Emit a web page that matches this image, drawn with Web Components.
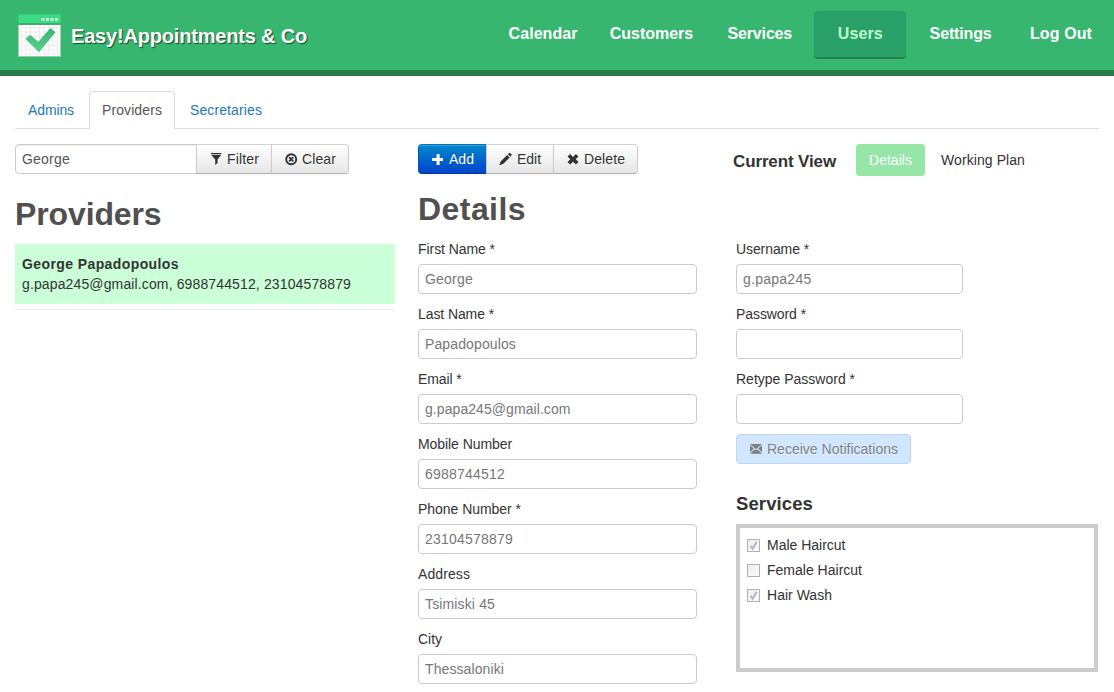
<!DOCTYPE html>
<html lang="en">
<head>
<meta charset="utf-8">
<title>Easy!Appointments</title>
<style>
html,body{margin:0;height:100%;overflow:hidden;background:#fff}
body{font:14px/20px "Liberation Sans",Arial,sans-serif;color:#333}
</style>
</head>
<body>
<ea-app></ea-app>
<script>
const define = (name, css, html, after) => customElements.define(name, class extends HTMLElement {
  connectedCallback() {
    if (this.shadowRoot) return;
    const t = document.createElement('template');
    t.innerHTML = `<style>*{box-sizing:border-box}:host{display:block;box-sizing:border-box}${css}</style>${typeof html === 'function' ? html(this) : html}`;
    this.attachShadow({mode: 'open'}).append(t.content.cloneNode(true));
    if (after) after(this);
  }
});

/* Text tracked so that it fills the advance width given in "w". */
define('ea-text', `:host{display:inline-block;white-space:nowrap}`, `<span><slot></slot></span>`, el => {
  const w = parseFloat(el.getAttribute('w'));
  const span = el.shadowRoot.querySelector('span');
  if (!w) return;
  span.style.letterSpacing = (w - span.getBoundingClientRect().width) / el.textContent.length + 'px';
  el.style.width = w + 'px';
});

const icons = {
  filter: `<path d="M2 1h10.400v1.200H2zM2.300 3h9.800L8.600 7.600v3.400L6.200 13V7.600z"/>`,
  clear: `<circle cx="7.200" cy="7.300" r="5" fill="none" stroke="currentColor" stroke-width="1.900"/><path d="M5.100 5.200l4.200 4.200M9.300 5.200L5.100 9.400" stroke="currentColor" stroke-width="1.700"/>`,
  plus: `<path d="M5.600 2h3v4h3.400v3H8.600v4h-3V9H1V6h4.600z"/>`,
  pencil: `<path d="M.2 13.300L1.600 9.500 8.200 2.900l2.500 2.500-6.600 6.600zM8.900 2.200l1.100-1.100q.8-.5 1.500.2l.9.900q.6.700 0 1.400l-1 1.100z"/>`,
  remove: `<path d="M4.100 2.100L7 4.900l2.900-2.800 2.600 2.500L9.700 7.300l2.800 2.800-2.600 2.500L7 9.800l-2.900 2.800-2.600-2.500 2.800-2.800-2.800-2.700z"/>`,
  mail: `<path d="M1 2h12L7 7.300zM1 3.200l3.800 3.400L1 10.600zM13 3.200L9.200 6.600l3.800 4zM5.500 7.200L7 8.500l1.500-1.300 4.300 4.600H1.200z"/>`
};
define('ea-icon', `:host{width:14px;height:14px;color:inherit}svg{display:block;fill:currentColor}`,
  el => `<svg width="14" height="14" viewBox="0 0 14 14">${icons[el.getAttribute('name')]}</svg>`);

define('ea-logo', `:host{width:43px;height:43px}svg{display:block}`, `
<svg width="43" height="43" viewBox="0 0 43 43">
<defs><linearGradient id="c" x1="0" y1="0" x2="0" y2="1"><stop offset="0" stop-color="#38b771"/><stop offset="1" stop-color="#5bd08f"/></linearGradient></defs>
<rect width="43" height="43" fill="#8fcfa9"/><rect width="43" height="10" fill="#3ddb84"/><rect x=".5" y=".5" width="42" height="9" fill="none" stroke="#35cf79"/>
<rect y="9.500" width="43" height="1.200" fill="#2a9d5d"/>
<path d="M23.500 4h3v3h-3zM28 4h3v3h-3zM32.500 4h3v3h-3zM37 4h3v3h-3z" fill="#c5f5d9"/>
<rect x=".8" y="11" width="41.400" height="31" fill="#fff"/>
<path d="M3.500 12v28M8 12v28M12.500 12v28M17 12v28M21.500 12v28M26 12v28M30.500 12v28M35 12v28M39.500 12v28M3 13.500h37M3 18h37M3 22.500h37M3 27h37M3 31.500h37M3 36h37M3 40h37" stroke="#ececec" fill="none"/>
<path d="M7.500 25l4.500-4.300 8.300 7.100L32.500 14l5 4.300L21 38.300z" fill="url(#c)"/>
</svg>`);

define('ea-nav-item', `:host{height:48px;width:92px;padding-top:13px;text-align:center;font-weight:bold;font-size:16px;color:#fff;border-radius:4px;border-bottom:2px solid transparent}
:host([wide]){width:108px}:host([active]){background:#2aa069;border-bottom-color:#22814f;color:#bdffcb}`, `<slot></slot>`);

define('ea-header', `:host{height:76px;background:#37b66f;border-bottom:6px solid #267a4b;display:flex;align-items:flex-start;padding:11px 7px 0 18px}
ea-logo{margin-top:3px}.name{margin:15px auto 0 10px;font-size:20px;font-weight:bold;color:#fff;text-shadow:1px 1px 1px #1c4b2c}
nav{display:flex;gap:8.400px}`, `
<ea-logo></ea-logo><div class="name"><ea-text w="236">Easy!Appointments &amp; Co</ea-text></div>
<nav><ea-nav-item><ea-text w="69">Calendar</ea-text></ea-nav-item><ea-nav-item wide><ea-text w="83.500">Customers</ea-text></ea-nav-item><ea-nav-item><ea-text w="64.500">Services</ea-text></ea-nav-item><ea-nav-item active><ea-text w="45">Users</ea-text></ea-nav-item><ea-nav-item><ea-text w="62">Settings</ea-text></ea-nav-item><ea-nav-item><ea-text w="62">Log Out</ea-text></ea-nav-item></nav>`);

define('ea-tab', `:host{height:38px;padding:8px 12px 8px;border:1px solid transparent;border-bottom:0;border-radius:4px 4px 0 0;color:#1e7ab8;margin-right:2px}
:host([active]){background:#fff;border-color:#ddd;color:#555}`, `<slot></slot>`);
define('ea-tabs', `:host{display:flex;height:38px;border-bottom:1px solid #ddd}`, `<slot></slot>`);

define('ea-button', `:host{display:flex;gap:4px;height:30px;padding:4px 12px;border:1px solid #ccc;border-color:#d3d3d3 #ccc #b3b3b3;background:linear-gradient(#fff,#e6e6e6);text-shadow:0 1px 1px rgba(255,255,255,.75);box-shadow:inset 0 1px 0 rgba(255,255,255,.2),0 1px 2px rgba(0,0,0,.05)}
:host([joined]){margin-left:-1px}:host([last]){border-radius:0 4px 4px 0}
:host([primary]){border-color:#0472bd #0450c3 #02389a;background:linear-gradient(#0088cc,#0044cc);color:#fff;border-radius:4px 0 0 4px;text-shadow:0 -1px 0 rgba(0,0,0,.25)}
:host([notify]){width:175px;border-color:#bdd7ee;border-radius:4px;background:#d0e7ff;color:#7b8085;box-shadow:none}
ea-icon{margin-top:3px}`, el => `<ea-icon name="${el.getAttribute('icon')}"></ea-icon><slot></slot>`);

define('ea-input', `:host{height:30px;border:1px solid #ccc;border-radius:4px;padding:4px 6px;background:#fff;color:#777}
:host([joined]){color:#555;border-radius:4px 0 0 4px;box-shadow:inset 0 1px 1px rgba(0,0,0,.075)}`, `<slot></slot>`);
define('ea-field', `:host{height:65px}label{display:block;margin-bottom:5px;height:20px}`,
  `<label><slot name="label"></slot></label><ea-input><slot></slot></ea-input>`);

define('ea-provider', `:host{border-bottom:1px solid #eee;padding-bottom:5px}
div{height:60px;background:#cbffd8;padding:10px 7px}b,span{display:block;height:20px}`,
  `<div><b><slot name="name"></slot></b><span><slot></slot></span></div>`);

define('ea-check', `:host{display:flex;height:20px;margin-bottom:5px;gap:7px}
i{width:13px;height:13px;margin-top:4px;border:1px solid #b2b2b2;background:linear-gradient(135deg,#ededed,#fafafa)}svg{display:block}`,
  el => `<i><svg width="11" height="11" viewBox="0 0 11 11">${el.hasAttribute('checked') ? '<path d="M2.600 5.700l2 3L8.700 1.800" fill="none" stroke="#b4b4b4" stroke-width="1.900"/>' : ''}</svg></i><slot></slot>`);

define('ea-pill', `:host{height:32px;padding:6px 13px;border-radius:4px;color:#333}:host([active]){background:#96e6a8;color:#fff}`, `<slot></slot>`);

define('ea-app', `
:host{height:692px;overflow:hidden}
main{padding:15px 15px 0}
.cols{display:grid;grid-template-columns:380px 279px 366px;column-gap:23px;padding-top:15px}
.cols>:nth-child(3){margin-left:16px;width:362px}
.row{display:flex}.row ea-input{width:182px}
h2{margin:0;height:40px;font-size:32px;line-height:40px;color:#505050}
.left h2{margin:20px 0 10px}.mid h2{margin:15px 0 10px}
.view{display:flex;height:32px;margin:0 0 63px -3px}
.view b{font-size:17px;line-height:36px;margin-right:20px}.view ea-pill+ea-pill{margin-left:3px}
.narrow{width:227px}
h5{margin:30px 0 10px;font-size:18.500px;line-height:20px}
.services{height:148px;border:4px solid #ccc;padding:7px 7px}`, `
<ea-header></ea-header>
<main>
<ea-tabs><ea-tab><ea-text w="46">Admins</ea-text></ea-tab><ea-tab active><ea-text w="60">Providers</ea-text></ea-tab><ea-tab><ea-text w="72">Secretaries</ea-text></ea-tab></ea-tabs>
<div class="cols">
<section class="left">
<div class="row"><ea-input joined><ea-text w="48">George</ea-text></ea-input><ea-button joined icon="filter"><ea-text w="32">Filter</ea-text></ea-button><ea-button joined last icon="clear"><ea-text w="34">Clear</ea-text></ea-button></div>
<h2><ea-text w="146.500">Providers</ea-text></h2>
<ea-provider><ea-text slot="name" w="157">George Papadopoulos</ea-text><ea-text w="329">g.papa245@gmail.com, 6988744512, 23104578879</ea-text></ea-provider>
</section>
<section class="mid">
<div class="row"><ea-button primary icon="plus"><ea-text w="25">Add</ea-text></ea-button><ea-button joined icon="pencil"><ea-text w="24">Edit</ea-text></ea-button><ea-button joined last icon="remove"><ea-text w="41">Delete</ea-text></ea-button></div>
<h2><ea-text w="108">Details</ea-text></h2>
<ea-field><ea-text slot="label" w="77">First Name *</ea-text><ea-text w="48">George</ea-text></ea-field>
<ea-field><ea-text slot="label" w="76">Last Name *</ea-text><ea-text w="91">Papadopoulos</ea-text></ea-field>
<ea-field><ea-text slot="label" w="43.500">Email *</ea-text><ea-text w="145.500">g.papa245@gmail.com</ea-text></ea-field>
<ea-field><ea-text slot="label" w="94">Mobile Number</ea-text><ea-text w="80">6988744512</ea-text></ea-field>
<ea-field><ea-text slot="label" w="103">Phone Number *</ea-text><ea-text w="88">23104578879</ea-text></ea-field>
<ea-field><ea-text slot="label" w="52">Address</ea-text><ea-text w="70">Tsimiski 45</ea-text></ea-field>
<ea-field><ea-text slot="label" w="24">City</ea-text><ea-text w="79">Thessaloniki</ea-text></ea-field>
</section>
<section>
<div class="view"><b><ea-text w="103">Current View</ea-text></b><ea-pill active><ea-text w="43">Details</ea-text></ea-pill><ea-pill><ea-text w="84">Working Plan</ea-text></ea-pill></div>
<div class="narrow">
<ea-field><ea-text slot="label" w="73">Username *</ea-text><ea-text w="68.500">g.papa245</ea-text></ea-field>
<ea-field><ea-text slot="label" w="70">Password *</ea-text></ea-field>
<ea-field><ea-text slot="label" w="119">Retype Password *</ea-text></ea-field>
<ea-button notify icon="mail"><ea-text w="131">Receive Notifications</ea-text></ea-button>
</div>
<h5><ea-text w="77">Services</ea-text></h5>
<div class="services"><ea-check checked><ea-text w="78.500">Male Haircut</ea-text></ea-check><ea-check><ea-text w="95">Female Haircut</ea-text></ea-check><ea-check checked><ea-text w="65">Hair Wash</ea-text></ea-check></div>
</section>
</div>
</main>`);
</script>
</body>
</html>
